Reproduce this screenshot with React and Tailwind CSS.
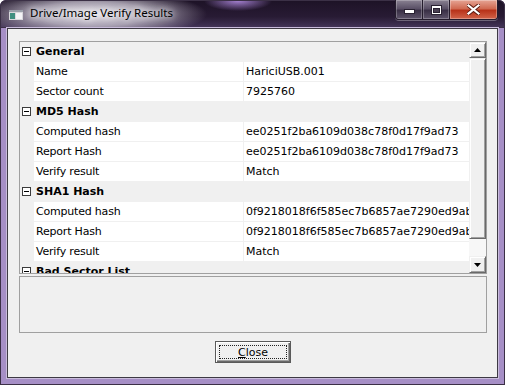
import React from 'react';

// Property grid data
const sections = [
    { title: 'General', rows: [['Name', 'HariciUSB.001'], ['Sector count', '7925760']] },
    {
        title: 'MD5 Hash',
        rows: [
            ['Computed hash', 'ee0251f2ba6109d038c78f0d17f9ad73'],
            ['Report Hash', 'ee0251f2ba6109d038c78f0d17f9ad73'],
            ['Verify result', 'Match'],
        ],
    },
    {
        title: 'SHA1 Hash',
        rows: [
            ['Computed hash', '0f9218018f6f585ec7b6857ae7290ed9ab41c2e7'],
            ['Report Hash', '0f9218018f6f585ec7b6857ae7290ed9ab41c2e7'],
            ['Verify result', 'Match'],
        ],
    },
    { title: 'Bad Sector List', rows: [] },
];

const raised =
    'border border-t-[#f0f0f0] border-l-[#f0f0f0] border-b-[#696969] border-r-[#696969] shadow-[inset_1px_1px_0_#ffffff,inset_-1px_-1px_0_#a0a0a0] bg-[#f0f0f0]';

const CaptionButtons = () => (
    <div className="ml-auto flex h-[20px] rounded-b-[4px] border border-t-0 border-[#241c2c] overflow-hidden shadow-[0_1px_0_rgba(255,255,255,0.3)]">
        <div className="w-[27px] flex items-center justify-center border-r border-[#241c2c] bg-[linear-gradient(to_bottom,#8a8292,#5a5066_45%,#3a3046_55%,#5e546a)] shadow-[inset_0_0_0_1px_rgba(255,255,255,0.25)]">
            <svg width="11" height="9" viewBox="0 0 11 9">
                <rect x="0.5" y="4.5" width="10" height="4" fill="#fff" stroke="#2a2232" />
            </svg>
        </div>
        <div className="w-[27px] flex items-center justify-center border-r border-[#241c2c] bg-[linear-gradient(to_bottom,#8a8292,#5a5066_45%,#3a3046_55%,#5e546a)] shadow-[inset_0_0_0_1px_rgba(255,255,255,0.25)]">
            <svg width="11" height="10" viewBox="0 0 11 10">
                <rect x="0.5" y="0.5" width="10" height="9" fill="#fff" stroke="#2a2232" />
                <rect x="2.5" y="3.5" width="6" height="4" fill="#4a4052" stroke="#2a2232" />
            </svg>
        </div>
        <div className="w-[47px] flex items-center justify-center bg-[linear-gradient(to_bottom,#e6a595,#d06a52_45%,#b8331a_55%,#d2644a)] shadow-[inset_0_0_0_1px_rgba(255,255,255,0.3)]">
            <svg width="13" height="11" viewBox="0 0 13 11">
                <path d="M1 1 L12 10 M12 1 L1 10" stroke="#5a1a10" strokeWidth="4" strokeLinecap="square" />
                <path d="M1.5 1.5 L11.5 9.5 M11.5 1.5 L1.5 9.5" stroke="#fff" strokeWidth="2.2" strokeLinecap="square" />
            </svg>
        </div>
    </div>
);

const Scrollbar = () => (
    <div className="w-[17px] flex flex-col shrink-0">
        <div className={`h-[16px] flex items-center justify-center ${raised}`}>
            <svg width="7" height="4" viewBox="0 0 7 4"><path d="M3.5 0 L7 4 L0 4 Z" fill="#000" /></svg>
        </div>
        <div className={`h-[181px] ${raised}`} />
        <div className="h-[17px] bg-[#f7f7f7]" />
        <div className={`h-[17px] flex items-center justify-center ${raised}`}>
            <svg width="7" height="4" viewBox="0 0 7 4"><path d="M0 0 L7 0 L3.5 4 Z" fill="#000" /></svg>
        </div>
    </div>
);

const App = () => {
    return (
        <div className="w-[505px] h-[385px] flex flex-col overflow-hidden rounded-t-[6px] bg-[#a68fc6] shadow-[inset_0_0_0_1px_#3b3046] font-['DejaVu_Sans',sans-serif] text-[11px] text-black">
            {/* Title bar */}
            <div className="h-[28px] shrink-0 flex items-start pl-[9px] pr-[7px] bg-[radial-gradient(ellipse_115px_24px_at_92px_14px,rgba(236,233,240,0.97)_0%,rgba(196,190,204,0.8)_50%,rgba(60,45,75,0)_100%),radial-gradient(ellipse_34px_10px_at_238px_1px,rgba(185,145,235,0.85),rgba(185,145,235,0)),linear-gradient(to_bottom,#1d1226,#281b34_60%,#45365a)] rounded-t-[6px] shadow-[inset_0_0_0_1px_#3b3046]">
                <svg className="mt-[10px] shrink-0" width="14" height="10" viewBox="0 0 14 10">
                    <rect x="0" y="0" width="14" height="10" fill="#d8d8dc" />
                    <rect x="0" y="0" width="14" height="2" fill="#9aa0aa" />
                    <rect x="1" y="3" width="5" height="6" fill="#3f8f80" />
                    <rect x="7" y="3" width="6" height="6" fill="#f4f4f6" />
                </svg>
                <span className="ml-[7px] mt-[5px] font-['Noto_Sans',sans-serif] text-[11.5px] leading-[16px] text-black [text-shadow:0_0_6px_#fff,0_0_10px_#fff]">
                    Drive/Image Verify Results
                </span>
                <CaptionButtons />
            </div>

            {/* Client area */}
            <div className="mx-[7px] h-[350px] shrink-0 border border-[#3e3a44] bg-[#f0f0f0] flex flex-col pt-[12px] pl-[11px] pr-[10px] pb-[14px] shadow-[0_0_0_1px_#c9bcdc]">
                {/* Property grid */}
                <div className="h-[233px] shrink-0 border border-[#a0a0a0] flex bg-[#f0f0f0]">
                    <div className="w-[450px] overflow-hidden">
                        {sections.map((section) => (
                            <div key={section.title}>
                                <div className="h-[20px] flex items-start">
                                    <div className="ml-[2px] mt-[5px] w-[9px] h-[9px] border border-[#3c3c3c] bg-white flex items-center justify-center">
                                        <div className="w-[5px] h-px bg-black" />
                                    </div>
                                    <span className="ml-[5px] font-bold leading-[19px]">{section.title}</span>
                                </div>
                                {section.rows.map(([label, value], i) => (
                                    <div key={i} className="h-[20px] flex pb-px">
                                        <div className="w-[14px] shrink-0" />
                                        <div className="w-[209px] shrink-0 bg-white pl-[2px] leading-[19px] tracking-[-0.2px] whitespace-nowrap overflow-hidden">
                                            {label}
                                        </div>
                                        <div className="w-px shrink-0" />
                                        <div className="flex-1 bg-white pl-[2px] leading-[19px] whitespace-nowrap overflow-hidden">
                                            {value}
                                        </div>
                                    </div>
                                ))}
                            </div>
                        ))}
                    </div>
                    <Scrollbar />
                </div>

                {/* Description box */}
                <div className="mt-[2px] h-[57px] shrink-0 border border-[#a0a0a0] bg-[#f0f0f0]" />

                {/* Close button */}
                <div className="mt-[8px] flex justify-center">
                    <button className="w-[76px] h-[22px] border border-[#5a5a5a] bg-[#f0f0f0] p-[3px] shadow-[inset_1px_1px_0_#ffffff,inset_-1px_-1px_0_#696969,inset_-2px_-2px_0_#a0a0a0]">
                        <div className="h-full border border-dotted border-[#222] flex items-center justify-center leading-none">
                            <span className="underline">C</span>lose
                        </div>
                    </button>
                </div>
            </div>
            <div className="flex-1" />
        </div>
    );
};

export default App;
